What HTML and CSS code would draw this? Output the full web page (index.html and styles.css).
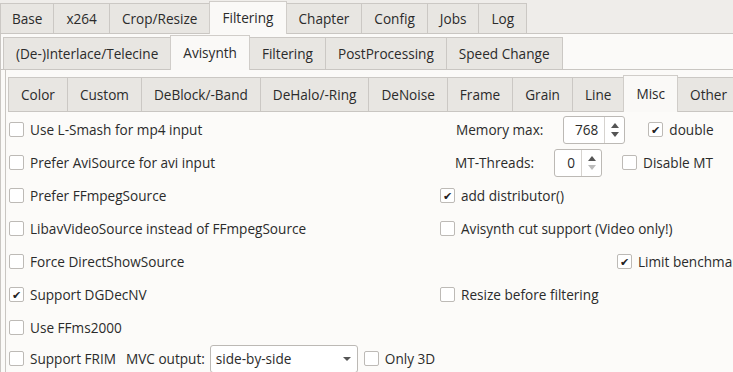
FILE: index.html
```html
<!DOCTYPE html>
<html>
<head>
<meta charset="utf-8">
<link rel="stylesheet" href="styles.css">
</head>
<body>
<div class="tabs tabs1">
  <div class="tab">Base</div>
  <div class="tab">x264</div>
  <div class="tab">Crop/Resize</div>
  <div class="tab sel">Filtering</div>
  <div class="tab">Chapter</div>
  <div class="tab">Config</div>
  <div class="tab">Jobs</div>
  <div class="tab">Log</div>
</div>
<div class="pane pane1">
  <div class="tabs tabs2">
    <div class="tab">(De-)Interlace/Telecine</div>
    <div class="tab sel">Avisynth</div>
    <div class="tab">Filtering</div>
    <div class="tab">PostProcessing</div>
    <div class="tab">Speed Change</div>
  </div>
  <div class="pane pane2">
    <div class="tabs tabs3">
      <div class="tab">Color</div>
      <div class="tab">Custom</div>
      <div class="tab">DeBlock/-Band</div>
      <div class="tab">DeHalo/-Ring</div>
      <div class="tab">DeNoise</div>
      <div class="tab">Frame</div>
      <div class="tab">Grain</div>
      <div class="tab">Line</div>
      <div class="tab sel">Misc</div>
      <div class="tab">Other</div>
    </div>
    <div class="content">
      <label class="cb"><span class="box"></span>Use L-Smash for mp4 input</label>
      <div class="rrow r1"><span class="lbl">Memory max:</span><span class="spin spin-mem"><span class="val">768</span><span class="arrows"><span class="up"></span><span class="down"></span></span></span><label class="cb"><span class="box on">✔</span>double</label></div>

      <label class="cb"><span class="box"></span>Prefer AviSource for avi input</label>
      <div class="rrow r2"><span class="lbl">MT-Threads:</span><span class="spin spin-mt"><span class="val">0</span><span class="arrows"><span class="up"></span><span class="down dis"></span></span></span><label class="cb"><span class="box"></span>Disable MT</label></div>

      <label class="cb"><span class="box"></span>Prefer FFmpegSource</label>
      <label class="cb"><span class="box on">✔</span>add distributor()</label>

      <label class="cb"><span class="box"></span>LibavVideoSource instead of FFmpegSource</label>
      <label class="cb"><span class="box"></span>Avisynth cut support (Video only!)</label>

      <label class="cb"><span class="box"></span>Force DirectShowSource</label>
      <label class="cb r5"><span class="box on">✔</span>Limit benchmark</label>

      <label class="cb"><span class="box on">✔</span>Support DGDecNV</label>
      <label class="cb"><span class="box"></span>Resize before filtering</label>

      <label class="cb full"><span class="box"></span>Use FFms2000</label>

      <div class="full brow">
        <label class="cb"><span class="box"></span>Support FRIM</label>
        <span class="lbl mvc">MVC output:</span>
        <span class="combo">side-by-side<span class="caret"></span></span>
        <label class="cb"><span class="box"></span>Only 3D</label>
      </div>
    </div>
  </div>
</div>
</body>
</html>
```

FILE: styles.css
```css
* { box-sizing: border-box; }
html, body { margin: 0; padding: 0; }
body {
  width: 733px;
  height: 372px;
  overflow: hidden;
  background: #efedea;
  font-family: "Open Sans", "Noto Sans", sans-serif;
  font-size: 13.6px;
  color: #2b2b2b;
}
.tabs {
  display: flex;
  align-items: flex-end;
  white-space: nowrap;
}
.tab {
  height: 30px;
  line-height: 29px;
  padding: 0 12px;
  background: #e8e6e2;
  border: 1px solid #cbc8c4;
  border-bottom: none;
  margin-right: -1px;
  position: relative;
}
.tab.sel {
  height: 33px;
  line-height: 31px;
  background: #faf9f7;
  border-color: #d0cdc9;
  z-index: 1;
  margin-bottom: -1px;
}
.tabs1 {
  height: 34px;
  border-bottom: 1px solid #c9c6c2;
  padding-left: 0;
}
.tabs1 .tab { padding: 0 12px; }
.tabs1 .tab:first-child { padding: 0 11px; }
.pane {
  background: #fbfaf8;
}
.pane1 {
  border-left: 1px solid #c9c6c2;
  padding: 3px 0 0 2px;
  height: 338px;
}
.tabs2 {
  height: 33px;
  border-bottom: 1px solid #c9c6c2;
  margin-left: -3px;
  padding-left: 3px;
}
.tabs2 .tab { padding: 0 12px; height: 32px; line-height: 31px; }
.tabs2 .tab.sel { height: 35px; line-height: 33px; }
.pane2 {
  border-left: 1px solid #c9c6c2;
  margin-left: 2px;
  padding: 6px 0 0 2px;
}
.tabs3 {
  height: 36px;
  border-bottom: 1px solid #c9c6c2;
}
.tabs3 .tab { padding: 0 12px; height: 34px; line-height: 33px; }
.tabs3 .tab.sel { height: 37px; line-height: 35px; }
.content {
  display: grid;
  grid-template-columns: 431px 1fr;
  grid-auto-rows: 33px;
  align-items: center;
  padding: 1px 0 0 1px;
  white-space: nowrap;
  background: #fcfbf9;
}
.full { grid-column: 1 / -1; }
.cb {
  display: flex;
  align-items: center;
}
.box {
  width: 15px;
  height: 15px;
  border: 1px solid #bdbab6;
  background: #fff;
  border-radius: 2px;
  margin-right: 6px;
  display: inline-flex;
  align-items: center;
  justify-content: center;
  font-size: 11px;
  line-height: 1;
  color: #222;
  flex: none;
}
.rrow {
  display: flex;
  align-items: center;
}
.r1 { margin-left: 16px; }
.r2 { margin-left: 15px; }
.r5 { margin-left: 177px; }
.spin {
  display: inline-flex;
  height: 28px;
  border: 1px solid #bcb9b5;
  border-radius: 3px;
  background: #fff;
  align-items: stretch;
}
.spin-mem { width: 62px; margin-left: 20px; margin-right: 23px; }
.spin-mt { width: 48px; margin-left: 20px; margin-right: 20px; }
.val {
  flex: 1;
  text-align: right;
  line-height: 26px;
  padding-right: 6px;
}
.arrows {
  width: 20px;
  border-left: 1px solid #d6d3cf;
  display: flex;
  flex-direction: column;
  align-items: center;
  justify-content: center;
  gap: 4px;
}
.up, .down {
  width: 0; height: 0;
  border-left: 4px solid transparent;
  border-right: 4px solid transparent;
}
.up { border-bottom: 5px solid #555; }
.down { border-top: 5px solid #555; }
.down.dis { border-top-color: #bbb; }
.brow {
  display: flex;
  align-items: center;
  margin-top: -4px;
}
.mvc { margin-left: 10px; }
.combo {
  margin-left: 5px;
  width: 148px;
  height: 28px;
  border: 1px solid #bcb9b5;
  border-radius: 3px;
  background: #fff;
  padding-left: 5px;
  line-height: 26px;
  position: relative;
  margin-right: 6px;
}
.caret {
  position: absolute;
  right: 6px;
  top: 11px;
  width: 0; height: 0;
  border-left: 4px solid transparent;
  border-right: 4px solid transparent;
  border-top: 4px solid #555;
}
```
